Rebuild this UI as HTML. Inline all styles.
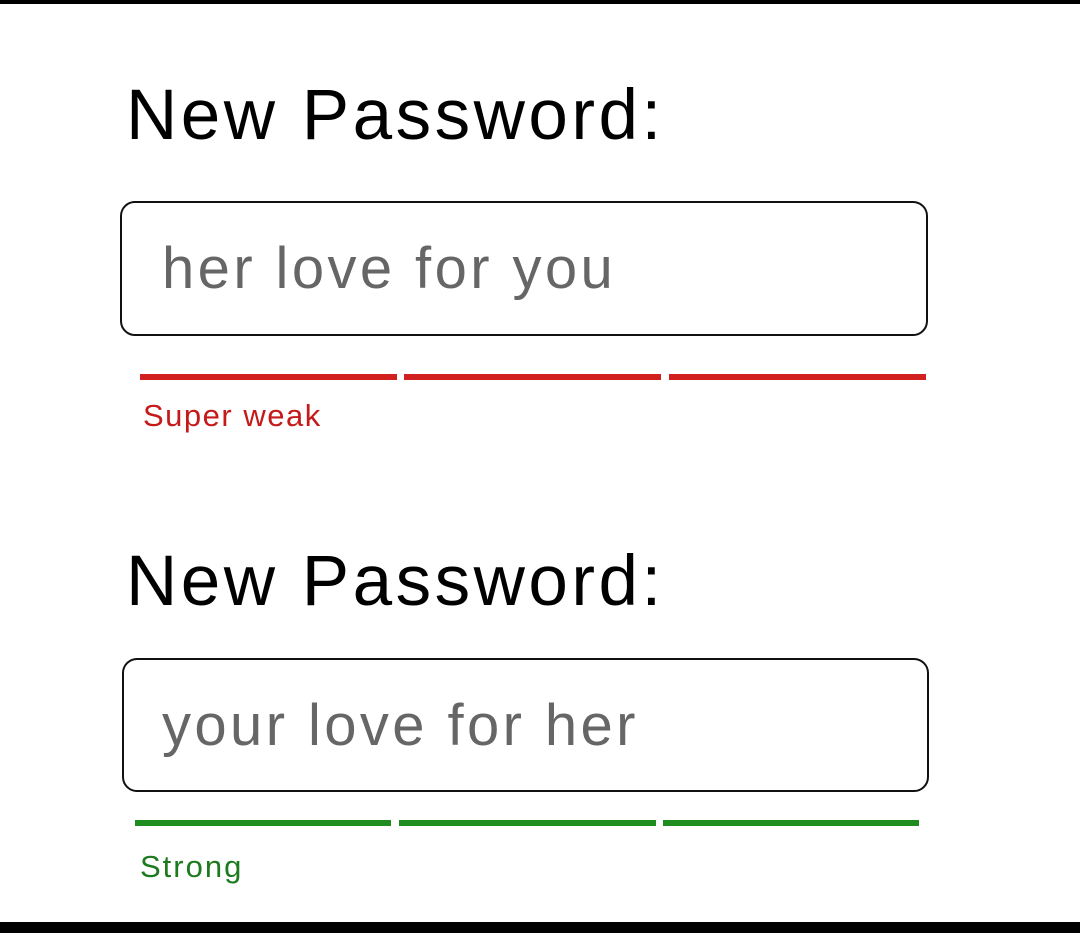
<!DOCTYPE html>
<html><head><style>
body{margin:0;width:1080px;height:933px;background:#fff;position:relative;overflow:hidden;font-family:"Liberation Sans",sans-serif}
.a{position:absolute}
.h{font-size:71px;color:#000;letter-spacing:3.5px;line-height:1}
.box{border:2.5px solid #111;border-radius:15px;box-sizing:border-box}
.t{font-size:58px;color:#666;line-height:1;letter-spacing:3.4px}
.bar{height:6px}
.r{background:#d21f1f}.g{background:#1e8c1e}
.s{font-size:31px;line-height:1;letter-spacing:1.5px}
</style></head><body>
<div class="a" style="left:0;top:0;width:1080px;height:4px;background:#000"></div>
<div class="a h" style="left:126px;top:80px">New Password:</div>
<div class="a box" style="left:120px;top:201px;width:808px;height:135px"></div>
<div class="a t" style="left:162px;top:240px">her love for you</div>
<div class="a bar r" style="left:140px;top:374px;width:257px"></div>
<div class="a bar r" style="left:404px;top:374px;width:257px"></div>
<div class="a bar r" style="left:669px;top:374px;width:257px"></div>
<div class="a s" style="left:143px;top:400px;color:#c41a1a">Super weak</div>
<div class="a h" style="left:126px;top:546px">New Password:</div>
<div class="a box" style="left:122px;top:658px;width:807px;height:134px"></div>
<div class="a t" style="left:162px;top:697px">your love for her</div>
<div class="a bar g" style="left:135px;top:820px;width:256px"></div>
<div class="a bar g" style="left:399px;top:820px;width:257px"></div>
<div class="a bar g" style="left:663px;top:820px;width:256px"></div>
<div class="a s" style="left:140px;top:851px;color:#1e7a1e;letter-spacing:2px">Strong</div>
<div class="a" style="left:0;top:922px;width:1080px;height:11px;background:#000"></div>
</body></html>
